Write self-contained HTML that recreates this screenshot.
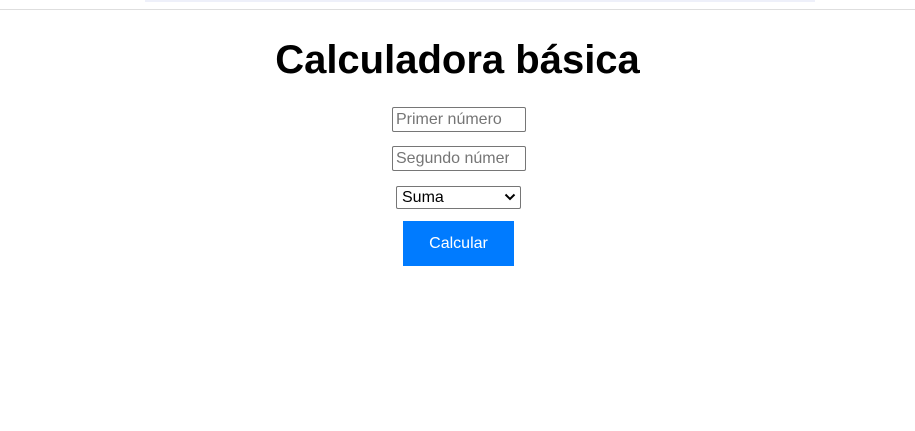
<!DOCTYPE html>
<html><head><meta charset="utf-8"><style>
body{margin:0;width:915px;height:431px;background:#fff;font-family:"Liberation Sans",Arial,sans-serif;position:relative;overflow:hidden}
.bar{position:absolute;left:145px;top:0;width:670px;height:2px;background:#eef0fa}
.line{position:absolute;left:0;top:9px;width:915px;height:1px;background:#dedede}
h1{position:absolute;left:0;width:915px;top:37px;margin:0;text-align:center;font-size:40px;font-weight:bold;line-height:46px}
.in{position:absolute;left:392px;width:134px;height:25px;box-sizing:border-box;border:1px solid #767676;border-radius:2px;font-size:16px;color:#757575;padding:0 3px;line-height:23px;overflow:hidden;white-space:nowrap}
.in span{display:block;overflow:hidden}
.sel{position:absolute;left:396px;top:186px;border:1px solid #767676;border-radius:2px;font-size:16px;line-height:21px;padding-left:5px;box-sizing:border-box;width:125px;height:23px}
.sel svg{position:absolute;right:4px;top:6px}
.btn{position:absolute;left:403px;top:221px;width:111px;height:45px;background:#007bff;color:#fff;font-size:16px;text-align:center;line-height:45px}
</style></head><body>
<div class="bar"></div><div class="line"></div>
<h1>Calculadora básica</h1>
<div class="in" style="top:107px"><span style="width:119px">Primer número</span></div>
<div class="in" style="top:146px"><span style="width:113px">Segundo número</span></div>
<div class="sel">Suma<svg width="12" height="8" viewBox="0 0 12 8"><path d="M1.5 1.5L6 6L10.5 1.5" stroke="#000" stroke-width="2" fill="none"/></svg></div>
<div class="btn">Calcular</div>
</body></html>
